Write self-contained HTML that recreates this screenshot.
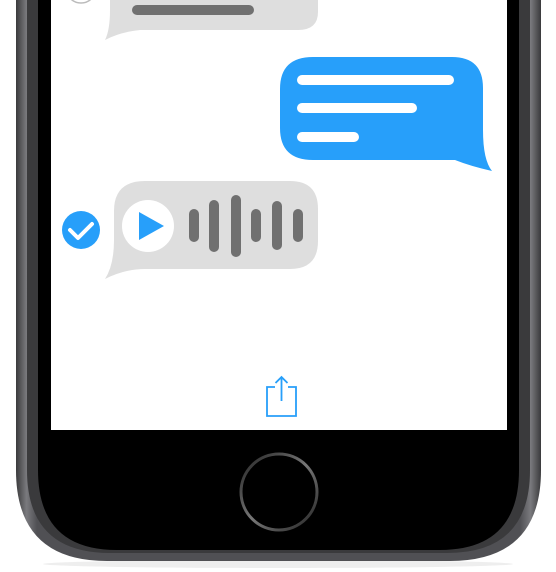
<!DOCTYPE html>
<html><head><style>
html,body{margin:0;padding:0;background:#fff;width:556px;height:572px;overflow:hidden}
</style></head><body>
<svg width="556" height="572" viewBox="0 0 556 572" xmlns="http://www.w3.org/2000/svg">
<defs>
<linearGradient id="fr" x1="0" x2="1" y1="0" y2="0">
<stop offset="0" stop-color="#3a3a3c"/><stop offset="0.02" stop-color="#7a7a7e"/><stop offset="0.04" stop-color="#505054"/><stop offset="0.96" stop-color="#505054"/><stop offset="0.98" stop-color="#7a7a7e"/><stop offset="1" stop-color="#3a3a3c"/>
</linearGradient>
<linearGradient id="hb" x1="0" y1="0" x2="1" y2="1">
<stop offset="0" stop-color="#222"/><stop offset="0.5" stop-color="#777"/><stop offset="1" stop-color="#222"/>
</linearGradient>
</defs>
<ellipse cx="278" cy="564" rx="235" ry="4" fill="#eeeeee"/>
<path d="M16,-10 H541 V470 Q541,561 450,561 H107 Q16,561 16,470 Z" fill="url(#fr)"/>
<path d="M27,-10 H530 V470 Q530,553 447,553 H110 Q27,553 27,470 Z" fill="#3a3a3c"/>
<path d="M38,-10 H519 V470 Q519,550 440,550 H117 Q38,550 38,470 Z" fill="#000"/>
<rect x="51" y="-10" width="456" height="440" fill="#fff"/>
<circle cx="81" cy="-12" r="15" fill="none" stroke="#bbb" stroke-width="1.5"/>
<path d="M118,-20 H318 V12 Q318,30 298,30 H140 Q120,32 105,40 Q110,30 110,10 V-20 Z" fill="#dedede"/>
<rect x="132" y="5" width="122" height="10" rx="5" fill="#707070"/>
<path d="M313,57 H452 Q483,57 483,88 V130 Q483,160 492,171 Q470,166 455,160 H313 Q280,160 280,128 V89 Q280,57 313,57 Z" fill="#279ffa"/>
<rect x="297" y="75" width="157" height="10" rx="5" fill="#fff"/>
<rect x="297" y="103" width="120" height="10" rx="5" fill="#fff"/>
<rect x="297" y="132" width="62" height="10" rx="5" fill="#fff"/>
<path d="M145,181 H290 Q318,181 318,209 V241 Q318,269 290,269 H145 Q125,269 105,279 Q114,265 114,240 V211 Q114,181 145,181 Z" fill="#dedede"/>
<circle cx="148" cy="226" r="26" fill="#fff"/>
<path d="M139,212 L164,226 L139,240 Z" fill="#279ffa"/>
<g stroke="#707070" stroke-width="10" stroke-linecap="round">
<line x1="194" y1="214" x2="194" y2="237"/>
<line x1="214" y1="205" x2="214" y2="247"/>
<line x1="236" y1="200" x2="236" y2="252"/>
<line x1="256" y1="214" x2="256" y2="237"/>
<line x1="277" y1="206" x2="277" y2="245"/>
<line x1="298" y1="214" x2="298" y2="237"/>
</g>
<circle cx="81" cy="230" r="19" fill="#279ffa"/>
<path d="M70,230 L78,238 L92,224" fill="none" stroke="#fff" stroke-width="4" stroke-linecap="round" stroke-linejoin="round"/>
<path d="M275,387 H267 V416 H296 V387 H288" fill="none" stroke="#279ffa" stroke-width="1.8"/>
<path d="M281.5,377 V401 M275.5,383 L281.5,377 L287.5,383" fill="none" stroke="#279ffa" stroke-width="1.8"/>
<circle cx="279" cy="492" r="38" fill="#000" stroke="url(#hb)" stroke-width="3"/>
</svg>
</body></html>
